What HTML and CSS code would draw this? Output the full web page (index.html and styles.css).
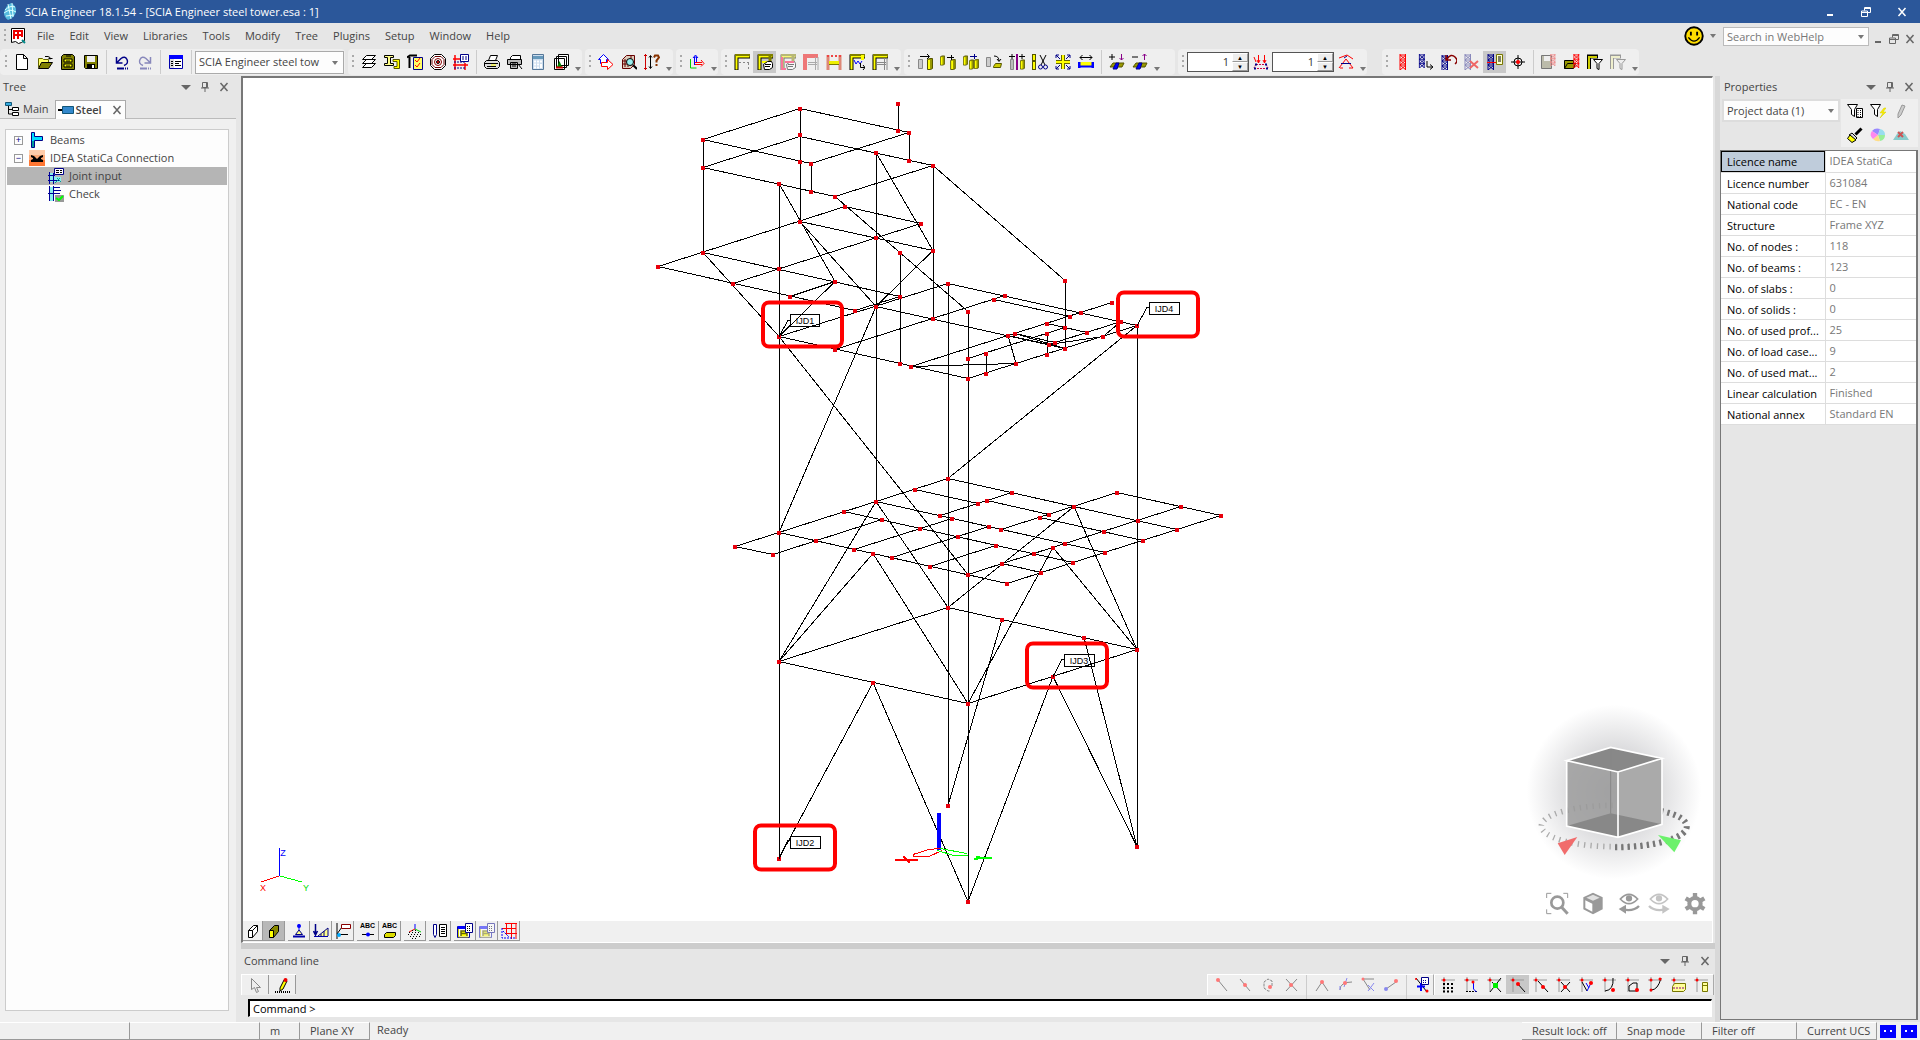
FILE: index.html
```html
<!DOCTYPE html>
<html lang="en">
<head>
<meta charset="utf-8">
<title>SCIA Engineer 18.1.54</title>
<link rel="stylesheet" href="styles.css">
</head>
<body>
<svg class="defs" aria-hidden="true">
<symbol id="new" viewBox="0 0 16 16"><path d="M2.500.500h7l4 4v11h-11zM9.500.500v4h4" fill="#fff" stroke="#000"/></symbol>
<symbol id="open" viewBox="0 0 16 16"><path d="M1.500 13.500v-9h4l1 1h5v3" fill="#ff6" stroke="#660"/><path d="M1.500 14.500l3-6h11l-4 6z" fill="#808000" stroke="#000"/><path d="M8 2.500h3l2 1v2M11.500 4.500h4" stroke="#000" fill="none"/></symbol>
<symbol id="archive" viewBox="0 0 16 16"><path d="M1.500 2.500l2-2h9l2 2v13h-13z" fill="#808000" stroke="#000"/><path d="M4 5h8v3H4zM4 10h8v3H4z" fill="#ff0" stroke="#000"/><path d="M6 2h5M6 7h4M6 12h4" stroke="#000"/></symbol>
<symbol id="save" viewBox="0 0 16 16"><path d="M1.500 1.500h13v13h-12l-1-1z" fill="#808000" stroke="#000"/><path d="M4 2h8v6H4z" fill="#eee"/><path d="M4 10h8v5H4z" fill="#000"/><path d="M9 11h2v3H9z" fill="#fff"/></symbol>
<symbol id="undo" viewBox="0 0 16 16"><path d="M2.500 3v6h6M3 8.500L7 4.500q4-3 6 1t-3 6" fill="none" stroke="#008" stroke-width="1.500"/><path d="M3 14.500h7M11 14.500h1M13 14.500h1" stroke="#008" stroke-width="2"/></symbol>
<symbol id="redo" viewBox="0 0 16 16"><path d="M13.500 3v6h-6M13 8.500L9 4.500q-4-3-6 1t3 6" fill="none" stroke="#88b" stroke-width="1.500"/><path d="M3 14.500h7M11 14.500h1M13 14.500h1" stroke="#88b" stroke-width="2"/></symbol>
<symbol id="panel" viewBox="0 0 16 16"><path d="M1.500 1.500h13v13h-13z" fill="#fff" stroke="#00a"/><path d="M1 1h14v4H1z" fill="#00f"/><path d="M2 5h4v9H2z" fill="#ddd"/><path d="M3 7.500h2M3 9.500h2M3 11.500h2M7 7.500h6M7 9.500h4M7 11.500h6" stroke="#000"/></symbol>
<symbol id="layers" viewBox="0 0 16 16"><path d="M1.500 13.500l4-4h9l-4 4zM1.500 9.500l4-4h9l-4 4zM1.500 5.500l4-4h9l-4 4z" fill="#fff" stroke="#000"/></symbol>
<symbol id="sections" viewBox="0 0 16 16"><path d="M.500 1.500h9v2h-3v6h3v2h-9v-2h3v-6h-3z" fill="#ff8" stroke="#000"/><path d="M9 5.500h6.500v9H10v-2h3v-5H9z" fill="#ff0" stroke="#550"/></symbol>
<symbol id="material" viewBox="0 0 16 16"><path d="M0 3.500l3-2h7M2.500 3v11" stroke="#000" stroke-width="2" fill="none"/><path d="M6.500 3.500h9v12h-9z" fill="#ff6" stroke="#008"/><path d="M8 6l2 2 3-4M8 11l2 2 3-4" stroke="#f00" fill="none"/></symbol>
<symbol id="target" viewBox="0 0 16 16"><path d="M4.500.500h7l4 4v7l-4 4h-7l-4-4v-7z" fill="#fff" stroke="#000"/><path d="M5 2.500h6l3 3v5l-3 3H5l-3-3v-5z" fill="#fff" stroke="#600"/><circle cx="8" cy="8" r="3.500" fill="#fff" stroke="#800"/><circle cx="8" cy="8" r="1.500" fill="#f00" stroke="#000"/></symbol>
<symbol id="loadtbl" viewBox="0 0 16 16"><path d="M2 1v15M12 9v7M0 5h10M0 11h15" stroke="#f00" stroke-width="1.500"/><path d="M1 8h12M1 14h12" stroke="#008" stroke-dasharray="2 1"/><path d="M7.500.500h8v7h-8z" fill="#fff" stroke="#008"/><path d="M9 3h2M12 3h2M9 5h2M12 5h2" stroke="#008"/></symbol>
<symbol id="print" viewBox="0 0 16 16"><path d="M4.500 6.500l2-5h7l-2 5z" fill="#fff" stroke="#000"/><path d="M.500 8.500l2-2h11l2 2v4l-2 2h-11l-2-2z" fill="#ddd" stroke="#000"/><path d="M1 9.500h13M3 12.500h9" stroke="#000"/><path d="M7 11h5" stroke="#ff0"/></symbol>
<symbol id="preview" viewBox="0 0 16 16"><path d="M3.500 3.500l2-2h8v4h-10z" fill="#fff" stroke="#000"/><path d="M.500 5.500h14v5h-14zM3.500 8.500h7v6h-7z" fill="#bbb" stroke="#000"/><path d="M11 10l4 5M5 10h4M5 12h4" stroke="#000"/></symbol>
<symbol id="calc" viewBox="0 0 16 16"><path d="M2.500.500h11v15h-11z" fill="#cde" stroke="#579"/><path d="M3 2h10v3H3z" fill="#69b"/><path d="M4 7.500h2M7 7.500h2M10 7.500h2M4 10.500h2M7 10.500h2M4 13.500h2M7 13.500h2M11 10v4" stroke="#fff" stroke-width="2"/></symbol>
<symbol id="gallery" viewBox="0 0 16 16"><path d="M5.500.500h10v11h-10zM3.500 2.500h10v11h-10zM1.500 4.500h10v11h-10z" fill="#fff" stroke="#000"/><path d="M4 13l2.500-6L9 13z" fill="#080"/><path d="M3 13.500h7" stroke="#c00" stroke-width="2"/></symbol>
<symbol id="arrows" viewBox="0 0 16 16"><path d="M5.500.500l5 5h-2v4h-6v-4h-2z" fill="#fff" stroke="#00f"/><path d="M3.500 8.500h6v-3l5.500 5-5.500 5v-3h-6z" fill="#fff" stroke="#f00"/></symbol>
<symbol id="zoombox" viewBox="0 0 16 16"><path d="M1.500 5.500l4-4h8v9l-4 4h-8z" fill="#dcb" stroke="#600"/><path d="M2 7h8M2 10h8M4 5v8M7 5v8M10 2v10" stroke="#600"/><circle cx="9" cy="8" r="3.500" fill="#9ee" stroke="#000"/><path d="M12 11l4 4" stroke="#000" stroke-width="2"/></symbol>
<symbol id="measure" viewBox="0 0 16 16"><path d="M1.500 0v16M0 1.500h3M0 14.500h3" stroke="#c00"/><path d="M6.500 2v12M5 3.500l1.500-2 1.500 2M5 12.500l1.500 2 1.500-2" stroke="#000" fill="none"/><path d="M10 3.500l1-2h3l1 2-2.500 3v2M12.500 10v2" stroke="#830" stroke-width="2" fill="none"/></symbol>
<symbol id="ucs" viewBox="0 0 16 16"><path d="M1.500 5v9h6" stroke="#0c0" fill="none"/><path d="M5.500 11V3h2v6M4 4l2.500-3L9 4" stroke="#00f" fill="none"/><path d="M6 8.500h7M6 10.500h7M12 6l3 3.500-3 3" stroke="#f00" fill="none"/></symbol>
<symbol id="frame" viewBox="0 0 16 16"><path d="M2.500 16V2.500H16" stroke="#000" stroke-width="4" fill="none"/><path d="M2.500 15.500v-13h13" stroke="#ff0" stroke-width="2" fill="none"/><path d="M1 1h15" stroke="#808000" stroke-width="2"/></symbol>
<symbol id="frdots" viewBox="0 0 16 16"><use href="#frame"/><path d="M5 8.500h10M14.500 9v6" stroke="#888" stroke-dasharray="2 2"/></symbol>
<symbol id="frhand" viewBox="0 0 16 16"><use href="#frame"/><path d="M13 1v10" stroke="#808000" stroke-width="3"/><path d="M5 8h7" stroke="#ff0" stroke-width="2"/><path d="M6.500 10.500l4-3h4l1 2v4l-3 2h-5z" fill="#fff" stroke="#000"/><path d="M8 10.500h6M8 12.500h5" stroke="#000"/></symbol>
<symbol id="frfade" viewBox="0 0 16 16"><g opacity=".5"><use href="#frhand"/><path d="M2 3v12h4M5 8h9" stroke="#f04" stroke-width="2" fill="none"/></g></symbol>
<symbol id="frred" viewBox="0 0 16 16"><path d="M2 16V2h13" stroke="#e77" stroke-width="4" fill="none"/><path d="M5 8.500h9M5 10.500h9M12.500 3v13M15 3v13" stroke="#aaa"/></symbol>
<symbol id="fryel" viewBox="0 0 16 16"><path d="M2 16V1M14 16V1" stroke="#d87" stroke-width="3"/><path d="M1 2h14" stroke="#e44" stroke-width="2" stroke-dasharray="2 2"/><path d="M3 8.500h10" stroke="#ee0" stroke-width="3"/><path d="M3 10.500h10" stroke="#770"/></symbol>
<symbol id="fraxes" viewBox="0 0 16 16"><use href="#frame"/><path d="M13.500 1v5" stroke="#ff0" stroke-width="3"/><path d="M5 6l2 4 2-3 2 3 2-3" stroke="#00f" fill="none"/><path d="M11.500 9v4.500H16M14 11l2 2.500-2 2.500" stroke="#000" fill="none"/></symbol>
<symbol id="fr2" viewBox="0 0 16 16"><use href="#frame"/><path d="M5 8.500h9M5 10.500h9M12.500 4v12M15 4v12" stroke="#888"/></symbol>
<symbol id="bar" viewBox="0 0 6 12"><path d="M.500 1.500l2-1h3v10l-2 1h-3z" fill="#990" stroke="#550"/><path d="M2 2v9" stroke="#ff0" stroke-width="2"/></symbol>
<symbol id="move" viewBox="0 0 16 16"><path d="M1.500 5.500h4v9h-4z" fill="#ccc" stroke="#888"/><use href="#bar" x="10" y="4" width="6" height="12"/><path d="M3 2.500h9M10 0l2.500 2.500L10 5" stroke="#000" fill="none"/></symbol>
<symbol id="copy" viewBox="0 0 16 16"><use href="#bar" x="0" y="1" width="5" height="11"/><use href="#bar" x="10" y="5" width="6" height="11"/><path d="M7 3.500h7M11.500 1v5" stroke="#000"/></symbol>
<symbol id="multi" viewBox="0 0 16 16"><use href="#bar" x="0" y="1" width="5" height="11"/><use href="#bar" x="6" y="5" width="5" height="11"/><use href="#bar" x="11" y="5" width="5" height="10"/><path d="M7 2.500h7M11.500 0v5" stroke="#008"/></symbol>
<symbol id="rotate" viewBox="0 0 16 16"><path d="M.500 3.500h4v9h-4z" fill="#ccc" stroke="#888"/><path d="M7.500 12.500l2-3h6l-1 4h-7z" fill="#cc0" stroke="#550"/><path d="M8 2q5 0 5 5M11 5l2 2.500L15 5" stroke="#000" fill="none"/></symbol>
<symbol id="mirror" viewBox="0 0 16 16"><path d="M1.500 5.500h3v10h-3z" fill="#bbb" stroke="#888"/><path d="M8 0v16" stroke="#808" stroke-width="2"/><use href="#bar" x="11" y="5" width="5" height="11"/><path d="M0 2.500h6M10 2.500h6M3 0v5M13 0v5" stroke="#000"/></symbol>
<symbol id="cut" viewBox="0 0 16 16"><path d="M2 0v16" stroke="#550" stroke-width="4"/><path d="M2 1v5M2 8v7" stroke="#ff0" stroke-width="2"/><path d="M8 1l5 10M14 1L9 11" stroke="#000"/><circle cx="8.500" cy="13" r="2" fill="none" stroke="#008"/><circle cx="13.500" cy="13" r="2" fill="none" stroke="#008"/></symbol>
<symbol id="scale" viewBox="0 0 16 16"><path d="M8 1v14M1 8h14" stroke="#660" stroke-width="4"/><path d="M8 1v14M1 8h14" stroke="#ff0" stroke-width="2"/><path d="M1 4V1h3M1 1l4 4M12 1h3v3M15 1l-4 4M1 12v3h3M1 15l4-4M12 15h3v-3M15 15l-4-4" stroke="#008" fill="none"/></symbol>
<symbol id="stretch" viewBox="0 0 16 16"><path d="M2 3.500h12M4.500 1L2 3.500 4.500 6M11.500 1L14 3.500 11.500 6" stroke="#000" fill="none"/><path d="M2 10h12" stroke="#ff0" stroke-width="4"/><path d="M1 8v6M15 8v6" stroke="#00f" stroke-width="3"/><path d="M2 12.500h12" stroke="#00f" stroke-width="2"/></symbol>
<symbol id="addp" viewBox="0 0 16 16"><path d="M0 3h6M3 0v6" stroke="#000"/><path d="M12.500 0v6M10.500 4l2 2 2-2" stroke="#808" fill="none"/><path d="M1 13l3-4h11l-2 4z" fill="#990" stroke="#550"/><path d="M4 15l3-6h3l-2 6z" fill="#00f" stroke="#008"/></symbol>
<symbol id="subp" viewBox="0 0 16 16"><path d="M0 3h6" stroke="#000"/><path d="M12.500 6V0M10.500 2l2-2 2 2" stroke="#808" fill="none"/><path d="M1 13l3-4h11l-2 4z" fill="#990" stroke="#550"/><path d="M4 15l3-6h3l-2 6z" fill="#00f" stroke="#008"/></symbol>
<symbol id="loads" viewBox="0 0 16 16"><path d="M5.500 1v8M11.500 1v8M4 6l1.500 3L7 6M10 6l1.500 3L13 6M1 3l2 5" stroke="#f00" fill="none"/><path d="M3 10.500h10M1 14.500h14M3 10l-2 4M13 10l2 4" stroke="#c04" stroke-dasharray="2 1"/><path d="M2 10.500h2M12 10.500h2M1 14.500h2M13 14.500h2" stroke="#008" stroke-width="2"/></symbol>
<symbol id="disp" viewBox="0 0 16 16"><path d="M1 4l8-3 6 4M8 5L1 14M8 5l7 9M2 14h3M11 14h4" stroke="#f00" fill="none"/><path d="M3 9.500h10M6 4l3-2" stroke="#008" fill="none"/></symbol>
<symbol id="lattice" viewBox="0 0 8 16"><path d="M1 0v16M6.500 0v16M1 1h6M1 6h6M1 11h6M1 1l6 5M7 1L1 6l6 5M7 6l-6 5 6 5M7 11l-6 5" fill="none" stroke="currentColor"/></symbol>
<symbol id="lat" viewBox="0 0 16 16"><g color="#f00"><use href="#lattice" x="4" width="8" height="16"/></g></symbol>
<symbol id="latmove" viewBox="0 0 16 16"><g color="#008"><use href="#lattice" width="8" height="14"/></g><path d="M9 7v6h5M12 10.500l3 2.500-3 2.500" stroke="#000" fill="none"/></symbol>
<symbol id="latundo" viewBox="0 0 16 16"><g color="#008"><use href="#lattice" width="8" height="16" y="1"/></g><path d="M6 5q4-6 8-2t0 7M5 1v5h5" stroke="#800" fill="none" stroke-width="1.500"/></symbol>
<symbol id="latdel" viewBox="0 0 16 16"><g color="#88b"><use href="#lattice" width="8" height="16"/></g><path d="M6 7l8 7M14 7l-8 7" stroke="#e66" stroke-width="2"/></symbol>
<symbol id="latdoc" viewBox="0 0 16 16"><g color="#008"><use href="#lattice" width="8" height="16"/></g><path d="M9.500.500h6v10h-6z" fill="#ffc" stroke="#770"/><path d="M11 3h3M11 5h3M11 7h3" stroke="#000"/><path d="M0 8.500h9" stroke="#f00"/></symbol>
<symbol id="cross" viewBox="0 0 16 16"><path d="M8 1v14M1 8h14" stroke="#000"/><circle cx="8" cy="8" r="4" fill="none" stroke="#000"/><circle cx="8" cy="8" r="2" fill="#f00"/></symbol>
<symbol id="latsave" viewBox="0 0 16 16"><path d="M.500 1.500h10v13H.500z" fill="#bba" stroke="#777"/><path d="M3 2h6v5H3z" fill="#eee"/><g color="#e88"><use href="#lattice" x="8" width="8" height="12"/></g></symbol>
<symbol id="latopen" viewBox="0 0 16 16"><path d="M.500 14.500v-8h9v3M.500 14.500l3-5h8l-2 5z" fill="#990" stroke="#000"/><g color="#f00"><use href="#lattice" x="9" width="7" height="14"/></g></symbol>
<symbol id="filt1" viewBox="0 0 16 16"><path d="M2 15V2.500h9" stroke="#000" stroke-width="4" fill="none"/><path d="M2 15V3h8" stroke="#cc0" stroke-width="2" fill="none"/><path d="M6.500 5.500h9l-3.500 4v6l-2-1v-5z" fill="#fff" stroke="#000"/></symbol>
<symbol id="filt2" viewBox="0 0 16 16"><path d="M2 15V2.500h9" stroke="#999" stroke-width="4" fill="none"/><path d="M2 15V3h8" stroke="#eec" stroke-width="2" fill="none"/><path d="M6.500 5.500h9l-3.500 4v6l-2-1v-5z" fill="#eee" stroke="#999"/></symbol>
<symbol id="pfilt" viewBox="0 0 16 16"><path d="M.500 1.500h10l-3 5v7l-3-2v-5z" fill="#fff" stroke="#000"/><path d="M9.500 5.500h6v9h-6z" fill="#fff" stroke="#000"/><path d="M11 7v7M13.500 7v7" stroke="#000" stroke-dasharray="1 1"/></symbol>
<symbol id="pflash" viewBox="0 0 16 16"><path d="M.500 1.500h10l-3 5v7l-3-2v-5z" fill="#fff" stroke="#000"/><path d="M14 5l-4 5h3l-3 5 6-6h-3l3-4z" fill="#fe0" stroke="#cc0" stroke-width=".500"/></symbol>
<symbol id="pencil" viewBox="0 0 16 16"><path d="M9 2l3 1-4 9-3 3V11z" fill="#ccc" stroke="#999"/></symbol>
<symbol id="brush" viewBox="0 0 16 16"><path d="M14.500 1.500l-6 6" stroke="#000" stroke-width="3"/><path d="M5 6l5 5-2 2-6-5z" fill="#ddd" stroke="#000"/><path d="M3 8l6 5-4 2.500-4.500-4z" fill="#ff0" stroke="#000"/></symbol>
<symbol id="pie" viewBox="0 0 16 16"><path d="M8 8L2 4a7 6 0 0 1 8-2z" fill="#98f"/><path d="M8 8l2-6a7 6 0 0 1 5 6z" fill="#9de"/><path d="M8 8h7a7 6 0 0 1-5 6z" fill="#9e9"/><path d="M8 8l2 6a7 6 0 0 1-7-2z" fill="#fd8"/><path d="M8 8l-5 4a7 6 0 0 1-1-8z" fill="#f8e"/></symbol>
<symbol id="cloudx" viewBox="0 0 16 16"><path d="M0 13l4-6 3-3 5 3 4 6z" fill="#8cc"/><path d="M5 5l5 5M10 5l-5 5" stroke="#c55" stroke-width="2"/></symbol>
<symbol id="smile" viewBox="0 0 16 16"><circle cx="8" cy="8" r="7" fill="#fd0" stroke="#000" stroke-width="1.500"/><path d="M5.500 4.500v3M10.500 4.500v3" stroke="#000" stroke-width="1.500"/><path d="M3.500 9q4.500 6 9 0" fill="none" stroke="#000"/></symbol>
<symbol id="logo" viewBox="0 0 16 18"><path d="M9 0q6 3 5 9-2 6-8 8-4-3-4-7 1-7 7-10z" fill="#5bd" /><path d="M2 10q6-5 12-1M3 7q5-5 10-3M4 13l8-1M6 1l3 15M10 0l1 14" stroke="#dff" fill="none"/></symbol>
<symbol id="doc" viewBox="0 0 16 16"><path d="M1.500.500h13v12l-3 2-3 1-3-2-4 1z" fill="#fff" stroke="#000"/><path d="M3 3h10M3 7h10M4 3v8M8 3v8M12 3v6" stroke="#e00" stroke-width="2"/><path d="M12 12l3 3" stroke="#088" stroke-width="2"/></symbol>
<symbol id="maintree" viewBox="0 0 16 16"><path d="M.500 1.500h6v3h-6z" fill="#3ad" stroke="#157"/><path d="M3.500 5v8h4M4 8.500h3" stroke="#000" fill="none"/><path d="M7.500 6.500h6v3h-6zM7.500 11.500h6v3h-6z" fill="#fff" stroke="#000"/></symbol>
<symbol id="steel" viewBox="0 0 16 16"><path d="M0 8h5" stroke="#000" stroke-width="2"/><path d="M4.500 4.500h11v7h-11z" fill="#38c" stroke="#157"/></symbol>
<symbol id="beams" viewBox="0 0 16 16"><path d="M2.500.500h3v4h8v4h-8v7h-3z" fill="#0df" stroke="#008"/><path d="M4 9v6" stroke="#099" stroke-width="2"/></symbol>
<symbol id="idea" viewBox="0 0 16 16"><path d="M0 0h16v16H0z" fill="#fca"/><path d="M0 5h16v11H0z" fill="#fa7"/><path d="M0 10h16v6H0z" fill="#f73"/><path d="M2 5l3 1 3 3 3-3 3-1v2l-2 1v1l2 1v2H2v-2l2-1V8L2 7z" fill="#000"/></symbol>
<symbol id="joint" viewBox="0 0 16 16"><path d="M1 5h6v4h6v5H1z" fill="#8ee"/><path d="M1.500 4v12M5.500 5v11M0 7.500h7M0 12.500h11" stroke="#009"/><path d="M9 10l4 4M7 15l5-5" stroke="#099"/><path d="M6.500.500h9v6h-9z" fill="#fff" stroke="#008"/><path d="M8 2.500h3M12 2.500h2M8 4.500h3M12 4.500h2" stroke="#000"/></symbol>
<symbol id="check" viewBox="0 0 16 16"><path d="M1 1h5v14H1z" fill="#8ee"/><path d="M1.500 0v15M5.500 0v15M6 4.500h7M6 1.500h6M0 7.500h12" stroke="#009"/><path d="M7 9h9v7H7z" fill="#999"/><path d="M8 12l3 2 4-4" stroke="#0f0" stroke-width="2" fill="none"/></symbol>
<symbol id="min" viewBox="0 0 12 12"><path d="M3 9h6" stroke="currentColor" stroke-width="2"/></symbol>
<symbol id="restore" viewBox="0 0 12 12"><path d="M4.500 4.500v-3h6v5h-3M1.500 5h6v5.500h-6zM4 2.500h6M1 6.500h6" fill="none" stroke="currentColor"/></symbol>
<symbol id="x" viewBox="0 0 12 12"><path d="M2.500 2l7 8M9.500 2l-7 8" stroke="currentColor" stroke-width="1.500"/></symbol>
<symbol id="down" viewBox="0 0 12 12"><path d="M1 4h10L6 9z" fill="currentColor"/></symbol>
<symbol id="pin" viewBox="0 0 12 12"><path d="M3.500 1.500h5v5h-5zM7.500 1v6M2 7h8M6 7v4" fill="none" stroke="currentColor"/></symbol>
<symbol id="vwire" viewBox="0 0 16 16"><path d="M3.500 7.500h4v7h-4zM3.500 7.500l5-5h4v6l-5 6M7.500 7.500l5-5" fill="#fff" stroke="#000"/></symbol>
<symbol id="vsolid" viewBox="0 0 16 16"><path d="M3.500 7.500l5-5h4v6l-5 6h-4z" fill="#880" stroke="#000"/><path d="M3.500 7.500h4v7h-4z" fill="#ff0" stroke="#000"/></symbol>
<symbol id="vsup" viewBox="0 0 16 16"><path d="M8 1v7" stroke="#00f"/><circle cx="8" cy="3" r="2" fill="#00f"/><path d="M4.500 11.500L8 7l3.500 4.500z" fill="#ff8" stroke="#008"/><path d="M2 13.500h12" stroke="#00a" stroke-width="2"/></symbol>
<symbol id="vload" viewBox="0 0 16 16"><path d="M2.500 1v10M.500 8l2 4 2-4" stroke="#008" stroke-width="1.500" fill="none"/><path d="M5 13l10-8v8M8 11v3M11 8v6" stroke="#008" fill="#ff8"/><path d="M1 13.500h14" stroke="#00a"/></symbol>
<symbol id="vlabel" viewBox="0 0 16 16"><path d="M2 0v16M2 11.500h11M2 11l5-7" stroke="#000"/><path d="M6.500 1.500h9v4h-9z" fill="#fff" stroke="#800"/><circle cx="4" cy="12" r="2" fill="#0af"/></symbol>
<symbol id="vdots" viewBox="0 0 16 16"><path d="M8 6V1" stroke="#00f"/><path d="M8 6l-6 3" stroke="#f00"/><path d="M8 6l6 3" stroke="#0c0"/><path d="M2 9.500h12M1 11.500h14M3 13.500h11M5 7.500h6M5 15.500h6" stroke="#000" stroke-dasharray="1 2"/></symbol>
<symbol id="vlist" viewBox="0 0 16 16"><path d="M1.500 1.500h3v10l-1.500 3-1.500-3z" fill="#fff" stroke="#008"/><path d="M7.500 1.500h7v12h-7z" fill="#fff" stroke="#000"/><path d="M9 4.500h4M9 6.500h4M9 8.500h4M9 10.500h4" stroke="#000"/></symbol>
<symbol id="vwin" viewBox="0 0 16 16"><path d="M.500 3.500h12v11H.500z" fill="#fff" stroke="#00a"/><path d="M1 3h11v3H1z" fill="#00f"/><path d="M1.500 6v8h10" stroke="#cc0" fill="none"/><path d="M4 13V8h6v5M4 10.500h6" stroke="#660" stroke-width="1.500" fill="#ff0"/><path d="M8.500.500h7v9h-7z" fill="#fff" stroke="#008"/><path d="M10 3.500h4M10 5.500h4M10 7.500h4" stroke="#000" stroke-dasharray="1 1"/></symbol>
<symbol id="vgrid" viewBox="0 0 16 16"><path d="M4 .500h12M1 5.500h14M4 10.500h12M5.500 0v12M10.500 0v16M15 0v16" stroke="#f00"/><path d="M1 5v10h14M2 8l6 6" stroke="#00f" fill="none" stroke-dasharray="2 1"/></symbol>
<symbol id="cursor" viewBox="0 0 16 16"><path d="M4.500 1.500v11l3-2 2 5 2-1-2-4h4z" fill="#eee" stroke="#888"/></symbol>
<symbol id="cpen" viewBox="0 0 16 16"><path d="M10 3l3 1-4 8-3 2v-3z" fill="#ff0" stroke="#000"/><circle cx="11.500" cy="3" r="2" fill="#e00"/><path d="M1 15h15" stroke="#000" stroke-width="2" stroke-dasharray="1 1"/></symbol>
<symbol id="s1" viewBox="0 0 16 16"><path d="M4 3l9 11" stroke="#888"/><circle cx="4" cy="3" r="2" fill="#f77"/></symbol>
<symbol id="s2" viewBox="0 0 16 16"><path d="M3 2l10 12" stroke="#888"/><circle cx="8" cy="8" r="2" fill="#f77"/></symbol>
<symbol id="s3" viewBox="0 0 16 16"><path d="M12 9V4L8 2 4 5v6l4 3h2" stroke="#888" fill="none" stroke-dasharray="3 1"/><circle cx="10" cy="10" r="2" fill="#f77"/></symbol>
<symbol id="s4" viewBox="0 0 16 16"><path d="M3 2l11 12M14 2L3 14" stroke="#888"/><circle cx="8" cy="8" r="2" fill="#f77"/></symbol>
<symbol id="s5" viewBox="0 0 16 16"><path d="M8 5L2 14M8 5l6 9" stroke="#888"/><circle cx="8" cy="5" r="2" fill="#f77"/></symbol>
<symbol id="s6" viewBox="0 0 16 16"><path d="M3 13q0-8 12-8" stroke="#888" fill="none"/><path d="M3 13V9M10 1L7 10" stroke="#88e" fill="none"/><circle cx="8" cy="6" r="2" fill="#f77"/></symbol>
<symbol id="s7" viewBox="0 0 16 16"><path d="M3 2h11M3 2l7 11" stroke="#888"/><path d="M14 6l-6 8M8 8l6 6" stroke="#88e"/><circle cx="3" cy="2" r="1.500" fill="#f77"/></symbol>
<symbol id="s8" viewBox="0 0 16 16"><path d="M3 12l10-7" stroke="#888"/><circle cx="13" cy="4" r="2" fill="#f77"/><circle cx="3" cy="12" r="2" fill="#88e"/></symbol>
<symbol id="s9" viewBox="0 0 16 16"><path d="M2 1l11 14" stroke="#000"/><path d="M3 9.500h8M7 6v8" stroke="#00f" stroke-width="2"/><path d="M7.500.500h7v7h-7z" fill="#fff" stroke="#008"/><path d="M9 3.500h4M9 5.500h4" stroke="#008" stroke-dasharray="1 1"/><circle cx="13" cy="14" r="1.500" fill="#f00"/><circle cx="2" cy="2" r="1" fill="#f00"/></symbol>
<symbol id="org" viewBox="0 0 16 16"><path d="M3 0v15M0 3h14" stroke="#999"/><circle cx="3" cy="3" r="1.500" fill="#f00"/></symbol>
<symbol id="g1" viewBox="0 0 16 16"><use href="#org"/><path d="M2 7h12M2 11h12M2 14.500h12" stroke="#000" stroke-width="2" stroke-dasharray="2 2"/></symbol>
<symbol id="g2" viewBox="0 0 16 16"><use href="#org"/><path d="M2 14.500h12" stroke="#000" stroke-dasharray="2 1"/><path d="M9.500 5v7l3 3" stroke="#00f" fill="none"/><circle cx="9" cy="5" r="1.500" fill="#f00"/></symbol>
<symbol id="g3" viewBox="0 0 16 16"><use href="#org"/><path d="M14 1L3 15M5 5l9 10" stroke="#000"/><path d="M6 6h5v5H6z" fill="#0e0"/></symbol>
<symbol id="g4" viewBox="0 0 16 16"><use href="#org"/><path d="M7 6l8 9" stroke="#000"/><circle cx="8" cy="7" r="2" fill="#f00"/></symbol>
<symbol id="g5" viewBox="0 0 16 16"><use href="#org"/><path d="M5 4l10 11" stroke="#000"/><circle cx="10" cy="10" r="2" fill="#f00"/></symbol>
<symbol id="g6" viewBox="0 0 16 16"><use href="#org"/><path d="M5 5l9 10M14 5L5 15" stroke="#000"/><circle cx="9" cy="10" r="2" fill="#f00"/></symbol>
<symbol id="g7" viewBox="0 0 16 16"><use href="#org"/><path d="M3 5l5 9" stroke="#000" fill="none"/><path d="M8 14l4-8M7 6l3 5" stroke="#00f"/><circle cx="12" cy="6" r="2" fill="#f00"/></symbol>
<symbol id="g8" viewBox="0 0 16 16"><use href="#org"/><path d="M11 1q1 12-8 13" stroke="#000" fill="none"/><circle cx="11" cy="13" r="2" fill="#f00"/></symbol>
<symbol id="g9" viewBox="0 0 16 16"><use href="#org"/><path d="M4 14V9l4-3h4v8z" stroke="#000" fill="none"/><circle cx="12" cy="13" r="2" fill="#f00"/></symbol>
<symbol id="g10" viewBox="0 0 16 16"><use href="#org"/><path d="M3 13q7 0 10-12" stroke="#000" fill="none"/><circle cx="3" cy="13" r="1.500" fill="#f00"/><circle cx="12" cy="2" r="1.500" fill="#f00"/></symbol>
<symbol id="g11" viewBox="0 0 16 16"><use href="#org"/><path d="M1.500 9.500l2-3h11v6l-2 2h-11z" fill="#ff9" stroke="#770"/><path d="M2 11h11" stroke="#808" stroke-dasharray="2 1"/></symbol>
<symbol id="g12" viewBox="0 0 16 16"><use href="#org"/><path d="M8.500 5.500h5v9h-5z" fill="#ff9" stroke="#770"/><path d="M9 8.500h4" stroke="#770"/></symbol>
</svg>

<header class="title"><svg class="logo"><use href="#logo"/></svg><h1>SCIA Engineer 18.1.54 - [SCIA Engineer steel tower.esa : 1]</h1>
<div class="winbtns"><button aria-label="Minimize"><svg><use href="#min"/></svg></button><button aria-label="Restore"><svg><use href="#restore"/></svg></button><button aria-label="Close"><svg><use href="#x"/></svg></button></div></header>

<nav class="menu"><i class="grip"></i><svg class="ic"><use href="#doc"/></svg>
<div class="items"><button>File</button><button>Edit</button><button>View</button><button>Libraries</button><button>Tools</button><button>Modify</button><button>Tree</button><button>Plugins</button><button>Setup</button><button>Window</button><button>Help</button></div>
<button class="smile" aria-label="Feedback"><svg class="big"><use href="#smile"/></svg><i class="caret"></i></button>
<div class="search"><input type="text" aria-label="Search in WebHelp" placeholder="Search in WebHelp"><i class="caret"></i></div>
<div class="docbtns"><button aria-label="Minimize view"><svg><use href="#min"/></svg></button><button aria-label="Restore view"><svg><use href="#restore"/></svg></button><button aria-label="Close view"><svg><use href="#x"/></svg></button></div></nav>

<div class="bars">
<div class="band"><i class="grip"></i><button aria-label="New"><svg><use href="#new"/></svg></button><button aria-label="Open"><svg><use href="#open"/></svg></button><button aria-label="Archive"><svg><use href="#archive"/></svg></button><button aria-label="Save"><svg><use href="#save"/></svg></button><i class="sep"></i><button aria-label="Undo"><svg><use href="#undo"/></svg></button><button aria-label="Redo"><svg><use href="#redo"/></svg></button><i class="sep"></i><button aria-label="Panels"><svg><use href="#panel"/></svg></button><i class="sep"></i><div class="sel project"><select aria-label="Project"><option>SCIA Engineer steel tow</option></select><i class="caret"></i></div></div>
<div class="band"><i class="grip"></i><button aria-label="Layers"><svg><use href="#layers"/></svg></button><button aria-label="Sections"><svg><use href="#sections"/></svg></button><button aria-label="Materials"><svg><use href="#material"/></svg></button><button aria-label="Activity"><svg><use href="#target"/></svg></button><button aria-label="Load cases"><svg><use href="#loadtbl"/></svg></button><i class="sep"></i><button aria-label="Print"><svg><use href="#print"/></svg></button><button aria-label="Preview"><svg><use href="#preview"/></svg></button><button aria-label="Table"><svg><use href="#calc"/></svg></button><button aria-label="Gallery"><svg><use href="#gallery"/></svg></button><i class="more"></i></div>
<div class="band"><i class="grip"></i><button aria-label="Move view"><svg><use href="#arrows"/></svg></button><button aria-label="Zoom all"><svg><use href="#zoombox"/></svg></button><button aria-label="Measure"><svg><use href="#measure"/></svg></button><i class="more"></i></div>
<div class="band"><i class="grip"></i><button aria-label="UCS"><svg><use href="#ucs"/></svg></button><i class="more"></i></div>
<div class="band"><i class="grip"></i><button aria-label="Select"><svg><use href="#frdots"/></svg></button><button class="on" aria-label="Select by hand"><svg><use href="#frhand"/></svg></button><button aria-label="Deselect"><svg><use href="#frfade"/></svg></button><button aria-label="Previous selection"><svg><use href="#frred"/></svg></button><button aria-label="Invert selection"><svg><use href="#fryel"/></svg></button><button aria-label="Member axes"><svg><use href="#fraxes"/></svg></button><button aria-label="Frame"><svg><use href="#fr2"/></svg></button><i class="more"></i></div>
<div class="band wide"><i class="grip"></i><button aria-label="Move"><svg><use href="#move"/></svg></button><button aria-label="Copy"><svg><use href="#copy"/></svg></button><button aria-label="Multicopy"><svg><use href="#multi"/></svg></button><button aria-label="Rotate"><svg><use href="#rotate"/></svg></button><button aria-label="Mirror"><svg><use href="#mirror"/></svg></button><button aria-label="Trim"><svg><use href="#cut"/></svg></button><button aria-label="Scale"><svg><use href="#scale"/></svg></button><button aria-label="Stretch"><svg><use href="#stretch"/></svg></button><i class="sep"></i><button aria-label="Add"><svg><use href="#addp"/></svg></button><button aria-label="Remove"><svg><use href="#subp"/></svg></button><i class="more"></i></div>
<div class="band"><i class="grip"></i><div class="spin"><input aria-label="Load scale" value="1"><span><button aria-label="More">▲</button><button aria-label="Less">▼</button></span></div><button aria-label="Loads"><svg><use href="#loads"/></svg></button><div class="spin"><input aria-label="Result scale" value="1"><span><button aria-label="More">▲</button><button aria-label="Less">▼</button></span></div><button aria-label="Results"><svg><use href="#disp"/></svg></button><i class="more"></i></div>
<div class="band last"><i class="grip"></i><button aria-label="Lattice"><svg><use href="#lat"/></svg></button><button aria-label="Lattice move"><svg><use href="#latmove"/></svg></button><button aria-label="Lattice undo"><svg><use href="#latundo"/></svg></button><button aria-label="Lattice delete"><svg><use href="#latdel"/></svg></button><button class="on" aria-label="Lattice sheet"><svg><use href="#latdoc"/></svg></button><button aria-label="Centre"><svg><use href="#cross"/></svg></button><i class="sep"></i><button aria-label="Save selection"><svg><use href="#latsave"/></svg></button><button aria-label="Load selection"><svg><use href="#latopen"/></svg></button><button aria-label="Filter"><svg><use href="#filt1"/></svg></button><button aria-label="Filter off"><svg><use href="#filt2"/></svg></button><i class="more"></i></div>
</div>

<main>
<aside class="left">
<div class="phead"><h2>Tree</h2><button aria-label="Menu"><svg><use href="#down"/></svg></button><button aria-label="Pin"><svg><use href="#pin"/></svg></button><button aria-label="Close"><svg><use href="#x"/></svg></button></div>
<div class="tabs"><button class="tab"><svg class="ic"><use href="#maintree"/></svg>Main</button><button class="tab active"><svg class="ic"><use href="#steel"/></svg>Steel<svg class="sm"><use href="#x"/></svg></button></div>
<div class="treebody"><ul class="tree">
<li><i class="exp">+</i><svg class="ic"><use href="#beams"/></svg>Beams</li>
<li><i class="exp">−</i><svg class="ic"><use href="#idea"/></svg>IDEA StatiCa Connection</li>
<li class="sub on"><svg class="ic"><use href="#joint"/></svg>Joint input</li>
<li class="sub"><svg class="ic"><use href="#check"/></svg>Check</li>
</ul></div>
</aside>

<section class="center">
<div class="view">
<div class="stage">
<svg class="model" viewBox="243 79 1469 842">
<g fill="none" stroke="#000" shape-rendering="crispEdges">
<path d="M800 109L703 140M800 109L909 133M703 140L811 164L909 133M703 140V253M800 109V222M811 164V192M909 133V161M898 104V131M703 168L800 137L933 166L835 197zM933 166V319M933 166L1065 281M876 153V502M876 153L933 251M779 184L835 282M779 184V859M800 222L876 307M658 267L845 207L921 224L733 284M800 222L933 251M703 253L900 297M658 267L855 311M790 297L835 282M703 253L779 337M779 337L835 282M779 337L948 284M779 337L968 379M855 311L900 297M779 337L968 575M876 307L779 533M876 307L933 251M835 350L1005 296M876 307L1065 349M835 197L968 312M900 253V364M948 284L1137 326M994 300L1070 317M1112 303L1008 336L911 367L1016 364L1008 336M1008 336L1049 345M1015 334L1065 349M1015 334L1055 343M1047 324L1087 333M1065 328L968 359M1049 345L1121 322L1103 337L1049 345M968 379L1137 326M986 354V374M1047 334V355M1065 281V349M948 284V806M968 312V902M1137 326V847M1137 326L948 479M948 479L735 547L773 555L882 520M948 479L1177 530M915 490L978 504M987 501L1049 515M1040 518L1143 541M876 502L1105 553M844 512L1073 563M779 533L1007 584L1221 516L1117 493L1001 530M854 550L952 519M892 558L989 527M930 567L996 546M968 575L1181 507M940 516L1012 493M1002 564L1041 573M876 502L779 662L873 554L968 704L1053 548L1137 650L1074 507L948 608zM948 608L779 662L968 704L1137 650zM1002 620L948 806M1084 638L1137 847M873 683L779 859M873 683L968 902L1053 677L1137 847"/>
</g>
<path class="nodes" d="M800 109h0M703 140h0M811 164h0M909 133h0M898 131h0M898 104h0M800 135h0M800 162h0M703 168h0M779 184h0M811 192h0M835 197h0M876 153h0M909 161h0M933 166h0M845 207h0M921 224h0M800 222h0M876 238h0M933 251h0M900 253h0M703 253h0M658 267h0M733 284h0M779 269h0M835 282h0M790 297h0M855 311h0M900 297h0M876 307h0M933 319h0M948 284h0M779 337h0M835 350h0M900 364h0M911 367h0M1005 296h0M994 300h0M968 312h0M1008 336h0M1015 334h0M968 359h0M986 354h0M986 374h0M968 379h0M1016 364h0M1047 324h0M1070 317h0M1081 313h0M1112 303h0M1065 281h0M1065 328h0M1047 334h0M1087 333h0M1049 345h0M1055 343h0M1047 355h0M1065 349h0M1103 337h0M1121 322h0M1137 326h0M948 479h0M915 490h0M876 502h0M844 512h0M779 533h0M735 547h0M773 555h0M816 541h0M854 550h0M873 554h0M892 558h0M930 567h0M968 575h0M1007 584h0M1041 573h0M1073 563h0M1105 553h0M1143 541h0M1177 530h0M1221 516h0M1181 507h0M1117 493h0M1074 507h0M1138 521h0M1012 493h0M987 501h0M978 504h0M940 516h0M952 519h0M882 520h0M920 529h0M958 537h0M989 527h0M1001 530h0M996 546h0M1002 564h0M1034 554h0M1053 548h0M1065 544h0M1104 532h0M1040 518h0M1049 515h0M948 608h0M1002 620h0M1084 638h0M1137 650h0M779 662h0M873 683h0M968 704h0M1053 677h0M779 859h0M948 806h0M968 902h0M1137 847h0"/>
<g fill="none" stroke="#000" shape-rendering="crispEdges"><path d="M779 337l9-16h2M1137 326l10-18h2M1053 677l9-17h2M779 859l9-18h2"/><path d="M790.500 314.500h29v12h-29zM1149.500 302.500h30v12h-30zM1064.500 654.500h30v12h-30zM790.500 836.500h30v12h-30z"/></g>
<g class="jd"><text x="805" y="324">IJD1</text><text x="1164" y="312">IJD4</text><text x="1079" y="664">IJD3</text><text x="805" y="846">IJD2</text></g>
<g fill="none" stroke="#f00" stroke-width="4"><rect x="763" y="303" width="79" height="44" rx="6"/><rect x="1118" y="293" width="80" height="44" rx="6"/><rect x="1027" y="644" width="80" height="44" rx="6"/><rect x="755" y="826" width="80" height="44" rx="6"/></g>
<g fill="none" shape-rendering="crispEdges"><path d="M939 813v37" stroke="#00f" stroke-width="4"/><path d="M940 849l-11 1-16 5v2h16l13-6" stroke="#f00"/><path d="M895 860h23M903 857l7 6" stroke="#f00" stroke-width="2"/><path d="M940 849l27 5M937 851l17 5h14" stroke="#0f0"/><path d="M974 860l8-2h10M976 857l8 2" stroke="#0f0" stroke-width="2"/></g>
</svg>
<svg class="axes" viewBox="255 843 60 53"><g fill="none" shape-rendering="crispEdges"><path d="M279.500 876v-28" stroke="#00f"/><path d="M279 876l-18 6" stroke="#f00"/><path d="M280 876l22 6" stroke="#0f0"/></g><g class="jd"><text x="283" y="856" fill="#00f">Z</text><text x="263" y="891" fill="#f00">X</text><text x="306" y="891" fill="#0d0">Y</text></g></svg>
<svg class="cube" viewBox="0 0 636 693">
<defs><radialGradient id="halo"><stop offset="0" stop-color="#c4c4c8"/><stop offset=".500" stop-color="#dcdcde"/><stop offset="1" stop-color="#fff"/></radialGradient></defs>
<ellipse cx="342" cy="306" rx="262" ry="262" fill="url(#halo)"/>
<ellipse cx="342" cy="408" rx="218" ry="62" fill="none" stroke="#aaa" stroke-width="17" stroke-dasharray="4 15"/>
<path d="M345 472a218 62 0 0 0 215-64q-4-36-110-50" fill="none" stroke="#777" stroke-width="18" stroke-dasharray="7 12"/>
<path d="M200 212l132-40 154 33v198l-132 39-154-34z" fill="#999" fill-opacity=".800"/><path d="M354 246l132-41v198l-132 39z" fill="#aaa"/><path d="M200 212l132-40 154 33-132 41z" fill="#888"/><path d="M200 408l132-38 154 33-132 39z" fill="#888"/><path d="M332 172v198" stroke="#888" stroke-width="3"/>
<path d="M200 212l132-40 154 33-132 41zM200 212v196l154 34 132-39V205M354 246v196" fill="none" stroke="#fff" stroke-width="5"/>
<path d="M173 460l59-19-38 54z" fill="#f16c6c"/><path d="M474 435l69 16-20 36z" fill="#6cf16c"/>
<g fill="none" stroke="#999"><path d="M140 624v-14h14M190 610h13v14M140 658v13h14" stroke-width="3"/><circle cx="172" cy="638" r="18" stroke-width="8"/><path d="M185 652l18 19" stroke-width="9"/></g>
<path d="M279 608l29 14v36l-29 15-29-15v-36z" fill="#999"/><path d="M256 631l21 10v24l-21-11z" fill="#fff"/><path d="M259 623l20-9 20 9-20 9z" fill="#fff" opacity=".700"/>
<g fill="none" stroke="#999" stroke-width="5"><path d="M361 627q26-28 52 0-26 28-52 0z"/><circle cx="387" cy="625" r="7" fill="#999"/><path d="M417 648q-15 16-46 11" stroke-width="7"/></g><path d="M356 657l22-13v27z" fill="#999"/>
<g fill="none" stroke="#c4c4c4" stroke-width="5"><path d="M451 627q26-28 52 0-26 28-52 0z"/><circle cx="477" cy="625" r="7" fill="#c4c4c4"/><path d="M447 648q15 16 46 11" stroke-width="7"/></g><path d="M509 657l-22-13v27z" fill="#c4c4c4"/>
<circle cx="585" cy="641" r="17" fill="none" stroke="#999" stroke-width="12"/><path d="M585 609v14M585 659v14M557 625l12 7M601 650l12 7M557 657l12-7M601 632l12-7" stroke="#999" stroke-width="13"/>
</svg>
</div>
<div class="vbar"><button aria-label="Wire"><svg><use href="#vwire"/></svg></button><button class="on" aria-label="Solid"><svg><use href="#vsolid"/></svg></button><i></i><button aria-label="Supports"><svg><use href="#vsup"/></svg></button><button aria-label="Loads"><svg><use href="#vload"/></svg></button><button aria-label="Labels"><svg><use href="#vlabel"/></svg></button><i></i><button class="abc">ABC<svg class="sm"><path d="M0 4.500h12" stroke="#000"/><circle cx="6" cy="4.500" r="2" fill="#00f"/></svg></button><button class="abc">ABC<svg class="sm"><path d="M.500 7.500v-3l2-2h9v3l-2 2z" fill="#dd0" stroke="#000"/></svg></button><i></i><button aria-label="Dot grid"><svg><use href="#vdots"/></svg></button><i></i><button aria-label="List"><svg><use href="#vlist"/></svg></button><i></i><button aria-label="Window"><svg><use href="#vwin"/></svg></button><button aria-label="Window off" class="dim"><svg><use href="#vwin"/></svg></button><button aria-label="Grid"><svg><use href="#vgrid"/></svg></button></div>
</div>
<div class="hsplit"></div>
<div class="cmd">
<div class="phead"><h2>Command line</h2><button aria-label="Menu"><svg><use href="#down"/></svg></button><button aria-label="Pin"><svg><use href="#pin"/></svg></button><button aria-label="Close"><svg><use href="#x"/></svg></button></div>
<div class="cmdtools"><div class="grp"><button class="edge" aria-label="Cursor"><svg><use href="#cursor"/></svg></button><button class="edge" aria-label="Edit"><svg><use href="#cpen"/></svg></button></div>
<div class="grp snaps"><button aria-label="End"><svg><use href="#s1"/></svg></button><button aria-label="Middle"><svg><use href="#s2"/></svg></button><button aria-label="Arc"><svg><use href="#s3"/></svg></button><button aria-label="Cross"><svg><use href="#s4"/></svg></button><i class="sep"></i><button aria-label="Corner"><svg><use href="#s5"/></svg></button><button aria-label="Tangent"><svg><use href="#s6"/></svg></button><button aria-label="Normal"><svg><use href="#s7"/></svg></button><button aria-label="Line"><svg><use href="#s8"/></svg></button><i class="sep"></i><button aria-label="Settings"><svg><use href="#s9"/></svg></button></div>
<div class="grp snaps2"><button aria-label="Snap grid"><svg><use href="#g1"/></svg></button><button aria-label="Snap line grid"><svg><use href="#g2"/></svg></button><button aria-label="Snap node"><svg><use href="#g3"/></svg></button><button class="on" aria-label="Snap end"><svg><use href="#g4"/></svg></button><button aria-label="Snap middle"><svg><use href="#g5"/></svg></button><button aria-label="Snap cross"><svg><use href="#g6"/></svg></button><button aria-label="Snap normal"><svg><use href="#g7"/></svg></button><button aria-label="Snap tangent"><svg><use href="#g8"/></svg></button><button aria-label="Snap centre"><svg><use href="#g9"/></svg></button><button aria-label="Snap arc"><svg><use href="#g10"/></svg></button><button aria-label="Snap beam"><svg><use href="#g11"/></svg></button><button aria-label="Snap solid"><svg><use href="#g12"/></svg></button></div></div>
<input class="cmdin" aria-label="Command" value="Command &gt;">
</div>
</section>

<aside class="right">
<div class="phead"><h2>Properties</h2><button aria-label="Menu"><svg><use href="#down"/></svg></button><button aria-label="Pin"><svg><use href="#pin"/></svg></button><button aria-label="Close"><svg><use href="#x"/></svg></button></div>
<div class="ptools"><div class="sel"><select aria-label="Object"><option>Project data (1)</option></select><i class="caret"></i></div>
<div class="pgrid"><button aria-label="Filter list"><svg><use href="#pfilt"/></svg></button><button aria-label="Quick filter"><svg><use href="#pflash"/></svg></button><button aria-label="Edit"><svg><use href="#pencil"/></svg></button><button aria-label="Brush"><svg><use href="#brush"/></svg></button><button aria-label="Colours"><svg><use href="#pie"/></svg></button><button aria-label="Clear"><svg><use href="#cloudx"/></svg></button></div></div>
<div class="pbox"><table>
<tr class="cur"><th scope="row">Licence name</th><td>IDEA StatiCa</td></tr>
<tr><th scope="row">Licence number</th><td>631084</td></tr>
<tr><th scope="row">National code</th><td>EC - EN</td></tr>
<tr><th scope="row">Structure</th><td>Frame XYZ</td></tr>
<tr><th scope="row">No. of nodes :</th><td>118</td></tr>
<tr><th scope="row">No. of beams :</th><td>123</td></tr>
<tr><th scope="row">No. of slabs :</th><td>0</td></tr>
<tr><th scope="row">No. of solids :</th><td>0</td></tr>
<tr><th scope="row">No. of used prof...</th><td>25</td></tr>
<tr><th scope="row">No. of load case...</th><td>9</td></tr>
<tr><th scope="row">No. of used mat...</th><td>2</td></tr>
<tr><th scope="row">Linear calculation</th><td>Finished</td></tr>
<tr><th scope="row">National annex</th><td>Standard EN</td></tr>
</table></div>
</aside>
</main>

<footer><span class="cell w130"></span><span class="cell w130"></span><span class="cell w40">m</span><span class="cell w70">Plane XY</span><span class="ready">Ready</span>
<span class="cell w95">Result lock: off</span><span class="cell w85">Snap mode</span><span class="cell w95">Filter off</span><span class="cell w80">Current UCS</span><span class="led"></span><span class="led"></span></footer>
</body>
</html>
```
FILE: styles.css
```css
* { box-sizing: border-box; }
html, body { height: 100%; margin: 0; }
body { display: flex; flex-direction: column; overflow: hidden; background: #e6e6e6; color: #444; font: 11px/14px "Open Sans", "Noto Sans", sans-serif; }
button, input, select { font: inherit; color: inherit; }
button { display: grid; place-items: center; padding: 0; border: 0; background: none; }
svg { width: 16px; height: 16px; flex: none; }
h1, h2 { margin: 0; font: inherit; }
.defs { position: absolute; width: 0; height: 0; }
.caret, .more { border: 3px solid transparent; border-top: 4px solid #777; border-bottom: 0; width: 6px; height: 4px; flex: none; }

.title { display: flex; align-items: center; height: 23px; flex: none; background: #2b579a; color: #fff; padding: 0 12px 0 2px; }
.title h1 { flex: 1; padding-left: 7px; }
.title .logo { height: 18px; }
.winbtns { display: flex; gap: 24px; }
.winbtns svg, .docbtns svg, .phead svg { width: 12px; height: 12px; }

.grip { flex: none; width: 2px; height: 15px; background: repeating-linear-gradient(#aaa 0 2px, transparent 2px 5px); }
.menu { display: flex; align-items: center; height: 26px; flex: none; padding: 0 4px; }
.menu .ic { margin-left: 4px; }
.items { display: flex; flex: 1; gap: 15px; padding-left: 11px; }
.smile { display: flex; align-items: center; gap: 6px; margin-right: 7px; }
.smile .big { width: 20px; height: 20px; }
.search { position: relative; width: 146px; }
.search input { width: 100%; height: 19px; border: 1px solid #bbb; background: #fdfdfd; padding: 0 3px; }
.search input::placeholder { color: #777; opacity: 1; }
.search .caret { position: absolute; right: 5px; top: 8px; }
.docbtns { display: flex; gap: 4px; margin-left: 3px; padding-top: 6px; color: #666; }

.bars { display: flex; gap: 3px; height: 27px; flex: none; padding-bottom: 1px; }
.band { display: flex; align-items: center; height: 26px; padding-right: 3px; background: #efefef; border-radius: 4px; }
.band + .band { padding-right: 0; }
.band.wide { padding-right: 14px; }
.band.last { margin-left: 12px; }
.band:first-child { padding-left: 1px; padding-right: 1px; }
.band .grip { margin: 0 3px 0 4px; }
.band > button { width: 23px; height: 22px; }
.band .more { margin: 14px 1px 0 3px; }
.on { background: #c8c8c8; }
.sep { width: 8px; height: 24px; flex: none; background: linear-gradient(90deg, transparent 4px, #ccc 4px 5px, transparent 5px); }
.sel { position: relative; }
.sel select { appearance: none; width: 100%; height: 23px; border: 2px solid #ddd; border-radius: 0; background: #fdfdfd; padding: 0 3px; }
.sel .caret { position: absolute; right: 6px; top: 10px; }
.sel.project { width: 149px; }
.project select { border: 1px solid #aaa; }
.spin { display: flex; width: 62px; height: 20px; border: 1px solid #555; background: #fff; }
.spin input { width: 44px; border: 0; padding: 0 3px; text-align: right; background: none; color: #333; }
.spin span { display: grid; flex: 1; }
.spin button { font-size: 6px; line-height: 6px; background: #eee; color: #000; border: 1px solid #999; border-top-color: #fff; border-left-color: #fff; }

main { display: flex; flex: 1; min-height: 0; }
.phead { display: flex; align-items: center; height: 22px; flex: none; gap: 7px; padding: 0 6px 0 3px; color: #666; }
.phead h2 { flex: 1; color: #444; }
.left { display: flex; flex-direction: column; width: 236px; flex: none; }
.tabs { display: flex; align-items: flex-end; height: 21px; border-bottom: 1px solid #bbb; padding-left: 5px; }
.tab { display: flex; align-items: center; gap: 2px; height: 19px; padding-right: 6px; }
.tab.active { margin-bottom: -1px; padding: 0 2px; font-weight: 600; background: #fdfdfd; border: 1px solid #aaa; border-bottom: 0; }
.sm { width: 12px; height: 12px; }
.tab .sm { margin-left: 7px; color: #666; }
.treebody { display: flex; flex: 1; padding: 10px 7px 11px 5px; background: #f0f0f0; }
.tree { flex: 1; margin: 0; padding: 1px; list-style: none; background: #fdfdfd; border: 1px solid #ccc; }
.tree li { display: flex; align-items: center; height: 18px; padding-left: 7px; gap: 5px; }
.tree .exp { display: grid; place-items: center; width: 9px; height: 9px; margin-right: 1px; border: 1px solid #999; font: 9px/7px "Liberation Sans", sans-serif; color: #008; }
.tree .sub { padding-left: 41px; }
.tree .on { background: #b5b5b5; }

.center { display: flex; flex-direction: column; flex: 1; min-width: 0; padding-left: 5px; }
.view { display: flex; flex-direction: column; flex: 1; min-height: 0; background: #f0f0f0; border: 1px solid #fff; border-left: 2px solid #777; border-top: 2px solid #777; margin-right: 2px; }
.stage { position: relative; flex: 1; min-height: 0; background: #fff; }
.model { display: block; width: 100%; height: 100%; }
.nodes { fill: none; stroke: #e8000c; stroke-width: 4; stroke-linecap: square; shape-rendering: crispEdges; }
.jd { font: 9px "Liberation Sans", sans-serif; text-anchor: middle; }
.axes { position: absolute; left: 12px; bottom: 25px; width: 60px; height: 53px; }
.cube { position: absolute; right: 0; bottom: 0; width: 212px; height: 231px; }
.vbar { display: flex; height: 21px; flex: none; }
.vbar button { width: 22px; height: 20px; border-right: 1px solid #999; border-bottom: 1px solid #999; }
.vbar button:first-child { width: 20px; }
.vbar i { width: 3px; }
.vbar .on { background: #b8b8b8; }
.vbar .dim svg { opacity: .5; }
.vbar .abc { display: flex; flex-direction: column; align-items: center; justify-content: center; font: bold 7px/8px "Liberation Sans", sans-serif; color: #000; }
.vbar .abc .sm { height: 9px; }
.hsplit { height: 6px; flex: none; background: #ccc; }
.cmd { display: flex; flex-direction: column; height: 73px; flex: none; padding-bottom: 4px; }
.cmd .phead { height: 25px; padding: 0 4px 2px 3px; gap: 8px; }
.cmdtools { display: flex; height: 21px; }
.grp { display: flex; border-top: 1px solid #fff; border-left: 1px solid #fff; background: #efefef; }
.grp button { width: 23px; height: 19px; }
.grp .edge { width: 27px; border-right: 1px solid #999; }
.snaps { margin-left: auto; padding-left: 2px; }
.snaps, .snaps2 { border-right: 1px solid #aaa; }
.snaps2 { padding-left: 2px; margin-right: 1px; }
.cmdin { height: 18px; margin: 4px 3px 0 7px; padding: 0 3px; border: 1px solid #fff; border-top: 2px solid #000; border-left: 2px solid #000; background: #fff; color: #000; }

.right { display: flex; flex-direction: column; width: 205px; flex: none; padding: 0 2px 2px 0; border-left: 5px solid #d8d8d8; }
.right .phead { padding-right: 3px; padding-left: 4px; }
.ptools { display: flex; align-items: flex-start; gap: 1px; padding: 1px 0 3px 2px; }
.ptools .sel { width: 118px; }
.pgrid { display: grid; grid-template-columns: repeat(3, 23px); grid-auto-rows: 24px; flex: 1; padding: 0 2px; background: #efefef; }
.pbox { flex: 1; border: 1px solid #777; border-right-width: 2px; }
table { width: 100%; border-collapse: collapse; table-layout: fixed; background: #fff; }
th, td { height: 21px; padding: 0 0 0 6px; border-bottom: 1px solid #ddd; text-align: left; font-weight: normal; white-space: nowrap; }
th { width: 104px; border-right: 1px solid #ddd; color: #000; padding-top: 2px; }
td { color: #777; padding-left: 4px; }
.cur th { background: #bfccdb; outline: 1px solid #000; outline-offset: -1px; }

footer { display: flex; height: 18px; flex: none; background: #f0f0f0; padding-right: 1px; }
.cell { display: grid; align-items: center; padding-left: 10px; border-right: 1px solid #999; border-bottom: 1px solid #999; border-top: 1px solid #fff; }
.w130 { width: 130px; }
.w40 { width: 40px; }
.w70 { width: 70px; }
.w95 { width: 95px; }
.w85 { width: 85px; }
.w80 { width: 80px; }
.ready { flex: 1; padding: 1px 7px; }
.led { width: 16px; margin: 3px 2px 2px 3px; background: radial-gradient(circle at 5px 6px, #fff 1px, transparent 1px), radial-gradient(circle at 11px 6px, #fff 1px, transparent 1px), #00f; }
```
